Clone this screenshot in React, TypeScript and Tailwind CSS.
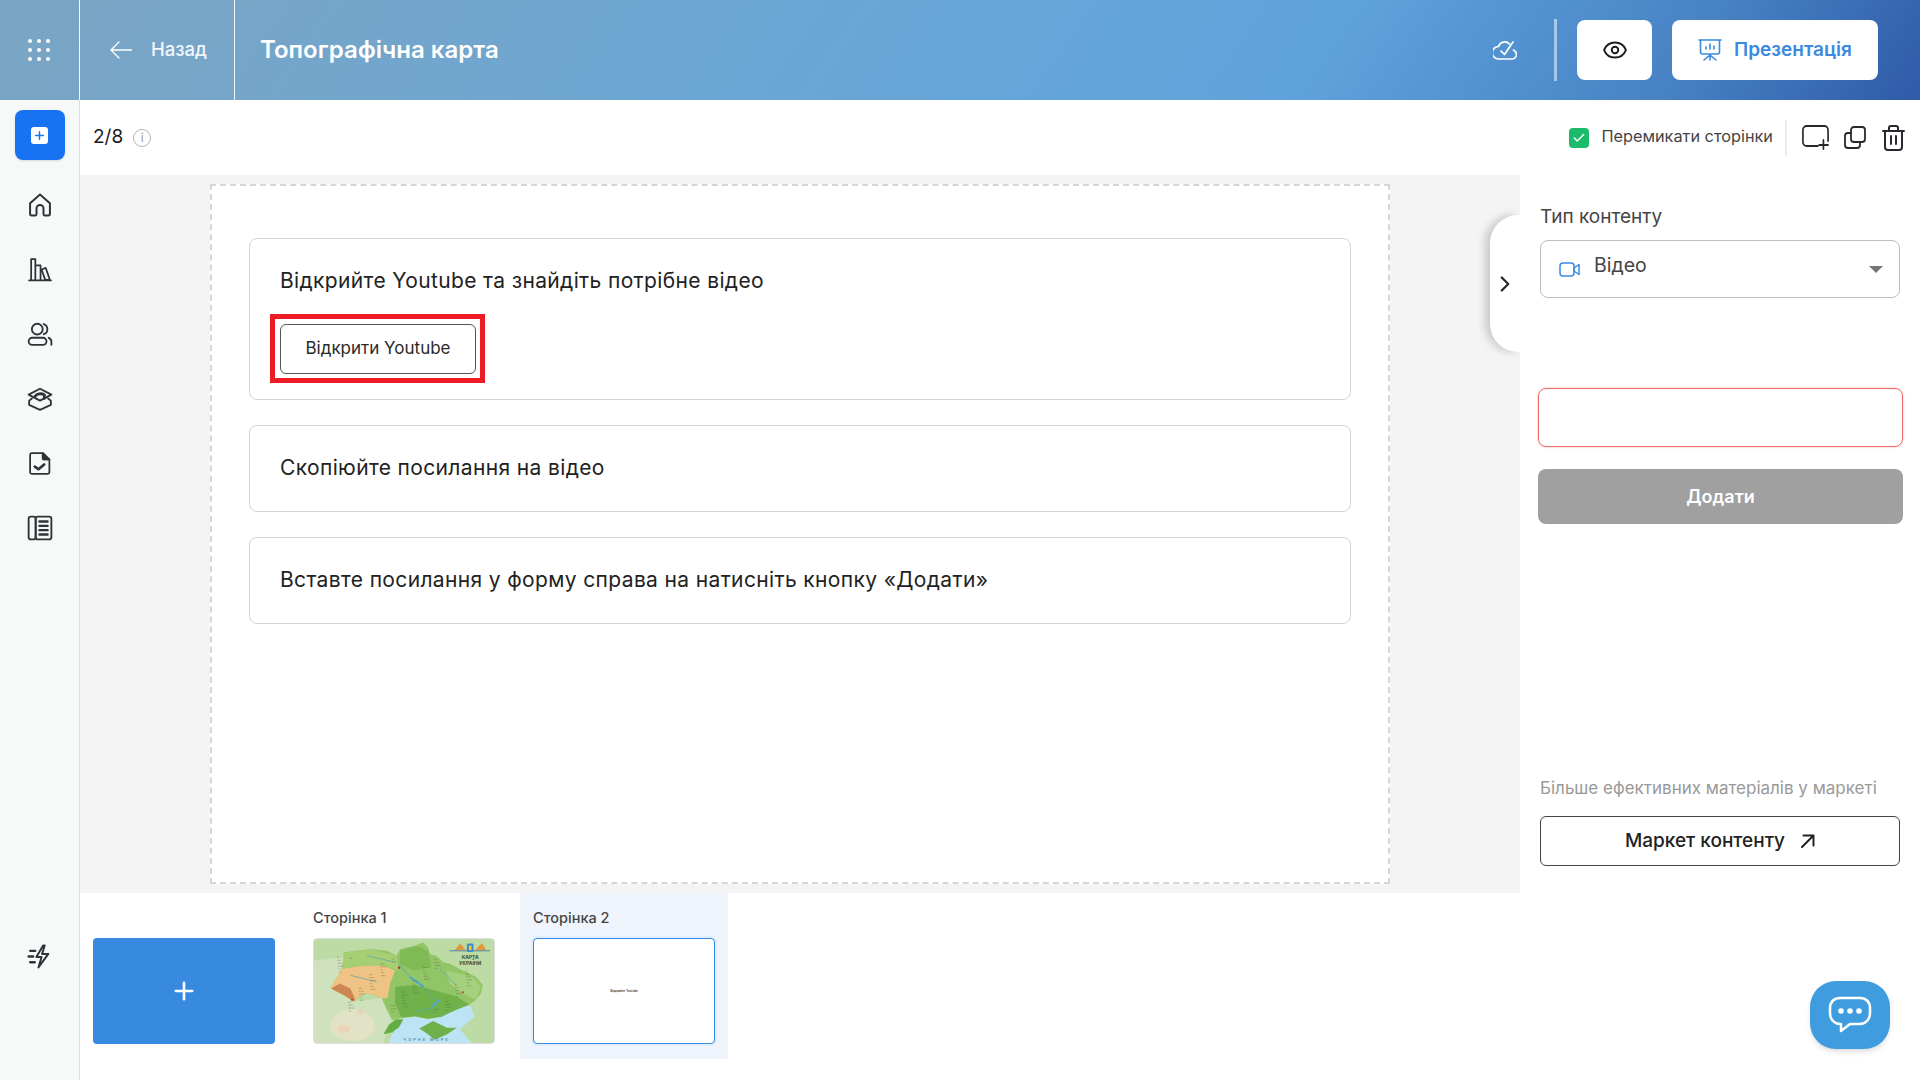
import React from 'react';
import { Check, ChevronRight, Eye, Plus } from 'lucide-react';

const Svg = ({ children, size = 24, className = '' }: { children: React.ReactNode; size?: number; className?: string }) => (
  <svg width={size} height={size} viewBox="0 0 24 24" fill="none" stroke="currentColor" strokeWidth={1.700} strokeLinecap="round" strokeLinejoin="round" className={className}>
    {children}
  </svg>
);

const HomeIcon = () => (
  <Svg size={28}>
    <path d="M3.500 10.500 12 3l8.500 7.500v9a1.500 1.500 0 0 1-1.500 1.500h-3a1 1 0 0 1-1-1v-5a3 3 0 0 0-6 0v5a1 1 0 0 1-1 1H5a1.500 1.500 0 0 1-1.500-1.500z" />
  </Svg>
);

const LibraryIcon = () => (
  <Svg size={25}>
    <path d="M2 22.500h21M4 22V2h4v20M8 22V8h5v14M14 12l4-1.500 4 11.500h-4.500z" />
  </Svg>
);

const UsersIcon = () => (
  <Svg size={26}>
    <circle cx="9.500" cy="7.500" r="5" />
    <rect x="1.500" y="15.500" width="16.500" height="6.500" rx="3.250" />
    <path d="M15.500 2.800a5 5 0 0 1 0 9.400M20 15.500c1.500.6 2.500 2 2.500 3.500v3" />
  </Svg>
);

const CapIcon = () => (
  <Svg size={26}>
    <path d="M12 2.500 1.500 8 12 13.500 22.500 8z" />
    <path d="M4.500 11.500 2 13.500v4L12 22l10-4.500v-4l-2.500-2" />
    <path d="M7.500 9.500c1.500-2.500 5.500-3 8.500-1.500v3.500" strokeWidth={2.600} />
  </Svg>
);

const DocCheckIcon = () => (
  <Svg size={25}>
    <path d="M4.500 2H15v5a1 1 0 0 0 1 1h5.500v12a2 2 0 0 1-2 2h-15A1.500 1.500 0 0 1 3 20.500v-17A1.500 1.500 0 0 1 4.500 2z" />
    <path d="M15.500 2l6 6h-6z" fill="currentColor" />
    <path d="m7.500 15 3.500 2.500 5.500-4.500" strokeWidth={2.600} />
  </Svg>
);

const BookIcon = () => (
  <Svg size={26}>
    <rect x="1.500" y="1.500" width="6.500" height="21" rx="2" />
    <rect x="8" y="1.500" width="14.500" height="21" rx="2" />
    <path d="M11.500 6h7.500M11.500 10h7.500M11.500 14h7.500M11.500 18h7.500" strokeWidth={2.200} />
  </Svg>
);

const FlashIcon = () => (
  <Svg size={25}>
    <path d="M15.500 1.500 9 12.500h5l-3 10L20.500 9.500h-6L17 1.500z" strokeWidth={1.900} />
    <path d="M3 6.500h5M1.500 12h4.500M3 17.500h4.500" strokeWidth={2.200} />
  </Svg>
);

// scattered labels and rivers on the tiny map
const specks = Array.from({ length: 70 }).map((_, i) => ({
  x: 110 + ((i * 97) % 420),
  y: 110 + ((i * 53) % 170),
  w: 6 + (i % 4) * 4,
}));

const UkraineMap = () => (
  <svg viewBox="40 54 544 318" preserveAspectRatio="none" className="w-full h-full block">
    <rect x="40" y="54" width="544" height="318" fill="#bddba4" />
    <path d="M40 120 130 110 110 215 160 245 245 235 275 300 250 372H40z" fill="#cfe2bd" />
    <path d="M95 300c30-40 85-40 115-10s10 70-40 75-105-25-75-65z" fill="#e2e3c6" />
    <path d="M112 322c15-8 32-4 36 8s-22 14-36 6zM170 270c12-4 24 4 20 12s-20 4-20-12z" fill="#ecd3b8" />
    <path d="M266 372 282 330l25-33 38-5 40 8 40-8 45-22 40-15 16 35-45 40 35 42z" fill="#bde4f5" />
    <path d="M90 205 110 170 125 150 130 110 130 95 170 90 210 85 260 90 290 105 300 85 320 80 345 75 370 65 385 80 390 100 410 105 430 125 450 130 490 150 530 170 550 195 545 220 530 240 510 255 490 258 470 270 440 280 425 292 400 290 385 298 345 290 320 292 305 295 285 300 265 320 250 345 280 340 305 300 275 300 260 270 245 235 225 225 190 220 160 245 130 225 110 215z" fill="#92c565" />
    <path d="M90 205 110 170 125 145 190 135 250 135 285 150 270 190 262 235 245 235 225 225 190 220 160 245 130 225 110 215z" fill="#efc383" />
    <path d="M92 205 118 190 150 205 165 240 160 245 130 225 110 215z" fill="#cb8652" />
    <path d="M125 145 130 95 210 85 290 105 296 150 250 135 190 135z" fill="#a6cf74" />
    <path d="M285 200 345 195 420 215 470 230 510 255 470 270 425 292 385 298 345 290 305 295 285 250z" fill="#6fb24a" />
    <path d="M300 90 350 75 385 90 395 140 340 150 300 130z" fill="#7ebb55" />
    <path d="M440 150 520 170 545 200 530 240 480 215 450 190z" fill="#a5d07d" />
    <path d="M250 345 268 315 290 300 310 300 296 325 275 338z" fill="#62ad44" />
    <path d="M358 328 400 305 442 325 472 325 442 345 405 362 380 342z" fill="#6eb04a" />
    <path d="M296 130 330 170 372 205 410 245 395 265 350 275M150 165 230 185M420 145 470 195M200 105 285 125" stroke="#4f9fb8" strokeWidth="2" fill="none" />
    <path d="M330 170 372 200M395 262 420 240" stroke="#4fa4d0" strokeWidth="6" fill="none" />
    {specks.map((s, i) => (
      <path key={i} d={`M${s.x} ${s.y}h${s.w}`} stroke="#5d5a42" strokeWidth="2.200" strokeDasharray="3 1.500" opacity="0.65" />
    ))}
    <circle cx="297" cy="142" r="4" fill="#b5392f" />
    <circle cx="490" cy="217" r="3" fill="#b5392f" />
    <circle cx="155" cy="240" r="3" fill="#b5392f" />
    <path d="M450 90h122" stroke="#3c6aa0" strokeWidth="2.500" />
    <path d="M465 88 482 68 498 87zM528 87 548 66 560 88z" fill="#e0963a" />
    <rect x="502" y="68" width="20" height="26" rx="4" fill="#3d8bcf" />
    <path d="M508 74h8v12l-4 4-4-4z" fill="#f0c93c" />
    <text x="512" y="116" textAnchor="middle" fontSize="15" fontWeight="700" fill="#3f4a3a">КАРТА</text>
    <text x="512" y="134" textAnchor="middle" fontSize="15" fontWeight="700" fill="#3f4a3a">УКРАЇНИ</text>
    <text x="380" y="366" textAnchor="middle" fontSize="12" letterSpacing="6" fontWeight="600" fill="#5d8da8">ЧОРНЕ МОРЕ</text>
  </svg>
);

const Step = ({ text, children, pb = 'pb-[28px]' }: { text: string; children?: React.ReactNode; pb?: string }) => (
  <div className={`border border-[#d4d4d4] rounded-lg pl-[30px] pt-[27px] mb-[25px] bg-white ${pb}`}>
    <div className="text-[21px] leading-[30px] text-[#222] tracking-[0.36px]">{text}</div>
    {children}
  </div>
);

const SideButton = ({ children }: { children: React.ReactNode }) => (
  <div className="h-[24px] flex items-center justify-center text-[#2f3338]">{children}</div>
);

export default function App() {
  return (
    <div className="w-[1920px] h-[1080px] flex flex-col overflow-hidden bg-white font-['Inter','Liberation_Sans',sans-serif] relative">
      {/* Top bar */}
      <header className="h-[100px] shrink-0 flex items-stretch text-white bg-[linear-gradient(125deg,#7ba5c3_0%,#69a6d6_45%,#5fa3dc_68%,#4782c4_87%,#2f5aa8_100%)]">
        <div className="w-[80px] border-r border-white/90 flex items-center justify-center pr-[2px]">
          <div className="grid grid-cols-3 gap-[5px]">
            {Array.from({ length: 9 }).map((_, i) => (
              <span key={i} className="w-[4px] h-[4px] rounded-full bg-white" />
            ))}
          </div>
        </div>
        <div className="w-[155px] border-r border-white/90 flex items-center pl-[30px] gap-[19px]">
          <svg width="22" height="18" viewBox="0 0 22 18" fill="none" stroke="currentColor" strokeWidth="1.300" strokeLinecap="round" strokeLinejoin="round">
            <path d="M21.500 9H1M9 1 1 9l8 8" />
          </svg>
          <span className="text-[18.500px] font-medium text-white/90">Назад</span>
        </div>
        <div className="pl-[25px] flex items-center text-[24px] font-semibold">Топографічна карта</div>
        <div className="ml-auto flex items-center pr-[42px]">
          <svg width="24" height="20" viewBox="0 0 24 20" fill="none" stroke="currentColor" strokeWidth="1.700" strokeLinecap="round" strokeLinejoin="round">
            <path d="M16.500 4A6.500 6.500 0 0 0 5.500 6.500a5.500 5.500 0 0 0 0 12.500h13.500a4.500 4.500 0 0 0 4-6.500c-.6-1.200-1.500-2-2.500-2.500" />
            <path d="m8 11 3.500 3.500L20 2" />
          </svg>
          <div className="w-[3px] h-[62px] bg-white/50 ml-[37px] mr-[20px]" />
          <button className="w-[75px] h-[60px] bg-white rounded-lg flex items-center justify-center text-[#1d1d1d]">
            <Eye size={26} strokeWidth={1.800} />
          </button>
          <button className="w-[206px] h-[60px] ml-[20px] bg-white rounded-lg flex items-center justify-center gap-[12px] text-[#398ae0] text-[19px] font-semibold">
            <svg width="24" height="24" viewBox="0 0 24 24" fill="none" stroke="currentColor" strokeWidth="1.600" strokeLinecap="round" strokeLinejoin="round">
              <path d="M1 2h22M2.500 2v12a2 2 0 0 0 2 2h15a2 2 0 0 0 2-2V2M12 16v6M12 17l-6 5M12 17l6 5M8 11V9M12 11V6M16 11V8" />
            </svg>
            Презентація
          </button>
        </div>
      </header>

      <div className="flex-1 flex min-h-0">
        {/* Sidebar */}
        <aside className="w-[80px] shrink-0 bg-[#f7f9f9] border-r border-[#dcdcdc] flex flex-col items-center pt-[10px] pb-[112px]">
          <button className="w-[50px] h-[50px] rounded-lg bg-[#1773f2] shadow-sm flex items-center justify-center mb-[33px]">
            <span className="w-[17px] h-[17px] rounded-[3px] bg-white flex items-center justify-center text-[#1773f2]">
              <Plus size={13} strokeWidth={2.600} />
            </span>
          </button>
          <div className="flex flex-col gap-[40.500px]">
            <SideButton><HomeIcon /></SideButton>
            <SideButton><LibraryIcon /></SideButton>
            <SideButton><UsersIcon /></SideButton>
            <SideButton><CapIcon /></SideButton>
            <SideButton><DocCheckIcon /></SideButton>
            <SideButton><BookIcon /></SideButton>
          </div>
          <div className="mt-auto">
            <SideButton><FlashIcon /></SideButton>
          </div>
        </aside>

        <div className="flex-1 flex flex-col min-w-0">
          {/* Toolbar */}
          <div className="h-[75px] shrink-0 flex items-center pl-[13px] pr-[15px] bg-white">
            <span className="text-[19px] text-[#1a1a1a]">2/8</span>
            <span className="ml-[10px] w-[18px] h-[18px] rounded-full border-[1.500px] border-[#b5b5b5] text-[#9a9a9a] text-[12px] leading-none flex items-center justify-center">i</span>
            <div className="ml-auto flex items-center">
              <span className="w-[20px] h-[20px] rounded bg-[#1cba6b] flex items-center justify-center text-white">
                <Check size={14} strokeWidth={2.500} />
              </span>
              <span className="ml-[12px] -mt-[3px] text-[16.300px] text-[#444]">Перемикати сторінки</span>
              <div className="w-[2px] h-[36px] bg-[#eeeeee] ml-[12px] mr-[15px]" />
              <svg width="27" height="25" viewBox="0 0 29 25" preserveAspectRatio="none" fill="none" stroke="#26292e" strokeWidth="1.800" strokeLinecap="round" strokeLinejoin="round">
                <path d="M17 21H5a4 4 0 0 1-4-4V5a4 4 0 0 1 4-4h19a4 4 0 0 1 4 4v11M23 15v9M18.500 20H28" />
              </svg>
              <svg className="ml-[15px]" width="22" height="23" viewBox="0 0 22 23" fill="none" stroke="#26292e" strokeWidth="1.800" strokeLinecap="round" strokeLinejoin="round">
                <rect x="7" y="1" width="14" height="15" rx="3" />
                <path d="M7 7H4a3 3 0 0 0-3 3v9a3 3 0 0 0 3 3h9a3 3 0 0 0 3-3v-3" />
              </svg>
              <svg className="ml-[16px]" width="23" height="26" viewBox="0 0 23 26" fill="none" stroke="#26292e" strokeWidth="2" strokeLinecap="round" strokeLinejoin="round">
                <path d="M1 6h21M7 6V3a2 2 0 0 1 2-2h5a2 2 0 0 1 2 2v3M3 6v16a3 3 0 0 0 3 3h11a3 3 0 0 0 3-3V6M9 11v8M14 11v8" />
              </svg>
            </div>
          </div>

          <div className="flex-1 flex min-h-0">
            <div className="flex-1 flex flex-col min-w-0">
              {/* Canvas */}
              <div className="h-[718px] shrink-0 bg-[#f4f4f4] pt-[9px] pl-[130px] relative">
                <div className="w-[1180px] h-[700px] bg-white border-2 border-dashed border-[#d6d6d6] pl-[37px] pr-[37px] pt-[52px]">
                  <Step text="Відкрийте Youtube та знайдіть потрібне відео" pb="pb-[16px]">
                    <div className="mt-[18px] -ml-[10px] w-[215px] h-[69px] border-[5px] border-[#ed1c24] flex items-center pl-[5px]">
                      <button className="w-[196px] h-[50px] border border-[#555] rounded-md text-[17px] text-[#2a2a2a]">Відкрити Youtube</button>
                    </div>
                  </Step>
                  <Step text="Скопіюйте посилання на відео" />
                  <Step text="Вставте посилання у форму справа на натисніть кнопку «Додати»" />
                </div>
                {/* Collapse tab */}
                <div className="absolute right-0 top-[40px] w-[30px] h-[137px] bg-white rounded-l-[28px] shadow-[-5px_0_8px_rgba(0,0,0,0.18)] flex items-center justify-center">
                  <ChevronRight size={26} strokeWidth={2} className="text-[#222]" />
                </div>
              </div>

              {/* Page strip */}
              <div className="flex-1 flex items-start pl-[13px]">
                <div className="pt-[45px]">
                  <button className="w-[182px] h-[106px] rounded bg-[#388ae0] flex items-center justify-center text-white">
                    <Plus size={28} strokeWidth={2.200} />
                  </button>
                </div>
                <div className="ml-[38px]">
                  <div className="h-[45px] pt-[15px] text-[14.500px] leading-[20px] font-medium text-[#444]">Сторінка 1</div>
                  <div className="w-[182px] h-[106px] rounded overflow-hidden border border-[#dddddd]">
                    <UkraineMap />
                  </div>
                </div>
                <div className="ml-[25px] w-[208px] h-[166px] bg-[#f0f5fd] px-[13px]">
                  <div className="h-[45px] pt-[15px] text-[14.500px] leading-[20px] font-medium text-[#444]">Сторінка 2</div>
                  <div className="w-[182px] h-[106px] rounded bg-white border-[1.500px] border-[#388ae0] shadow-[0_0_0_2px_#e1eefb] flex items-center justify-center">
                    <span className="text-[3px] leading-none font-medium text-[#111]">Відкрийте Youtube</span>
                  </div>
                </div>
              </div>
            </div>

            {/* Right panel */}
            <aside className="w-[400px] shrink-0 flex flex-col pl-[20px] pr-[20px] pt-[30px] pb-[214px] bg-white relative">
              <label className="text-[19px] leading-[24px] text-[#444]">Тип контенту</label>
              <div className="mt-[11px] h-[58px] border border-[#bdbdbd] rounded-lg flex items-center pl-[18px] pr-[16px]">
                <svg width="21" height="15" viewBox="0 0 21 15" fill="none" stroke="#398ae0" strokeWidth="1.500" strokeLinejoin="round">
                  <rect x="1" y="1" width="14" height="13" rx="3" />
                  <path d="m15 6 5-3.500v10L15 9z" />
                </svg>
                <span className="ml-[14px] text-[19.500px] text-[#444] -mt-[6px]">Відео</span>
                <span className="ml-auto w-0 h-0 border-l-[7px] border-r-[7px] border-t-[7px] border-l-transparent border-r-transparent border-t-[#757575]" />
              </div>
              <div className="-ml-[2px] -mr-[3px] mt-[90px] h-[59px] rounded-lg border border-[#f26b6b] shadow-[0_0_2px_rgba(242,107,107,0.6)]" />
              <button className="-ml-[2px] -mr-[3px] mt-[22px] h-[55px] rounded-lg bg-[#a0a0a0] text-white text-[18px] font-semibold">Додати</button>
              <div className="mt-auto text-[17px] leading-[22px] text-[#999]">Більше ефективних матеріалів у маркеті</div>
              <button className="mt-[17px] h-[50px] border border-[#444] rounded-md flex items-center justify-center gap-[16px] text-[19px] font-medium text-[#222]">
                Маркет контенту
                <svg width="14" height="14" viewBox="0 0 14 14" fill="none" stroke="currentColor" strokeWidth="2" strokeLinecap="round" strokeLinejoin="round">
                  <path d="M1 13 12.500 1.500M2.500 1.500h10v10" />
                </svg>
              </button>
              <button className="absolute right-[30px] bottom-[31px] w-[80px] h-[68px] rounded-[26px] bg-[#3f9ddf] shadow-md flex items-center justify-center">
                <svg width="44" height="38" viewBox="0 0 44 38" fill="none" stroke="white" strokeWidth="2.500" strokeLinejoin="round">
                  <path d="M12 2h20c6 0 10 4 10 10v5c0 6-4 11-10 11H22l-9 7v-7h-1C6 28 2 23 2 17v-5C2 6 6 2 12 2z" />
                  <circle cx="13" cy="15" r="2.800" fill="white" stroke="none" />
                  <circle cx="22" cy="15" r="2.800" fill="white" stroke="none" />
                  <circle cx="31" cy="15" r="2.800" fill="white" stroke="none" />
                </svg>
              </button>
            </aside>
          </div>
        </div>
      </div>
    </div>
  );
}
